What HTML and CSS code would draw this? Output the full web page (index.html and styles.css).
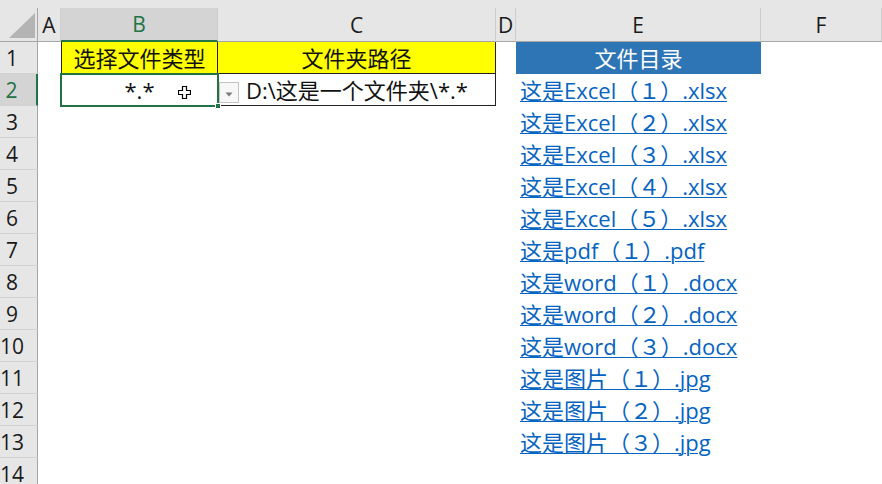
FILE: index.html
```html
<!DOCTYPE html>
<html lang="zh-CN">
<head>
<meta charset="utf-8">
<title>文件目录</title>
<link rel="stylesheet" href="styles.css">
</head>
<body>
<div class="strip"></div>
<div class="grid">
  <div class="ch corner"><svg class="tri" width="26" height="25" viewBox="0 0 26 25"><polygon points="26,0 26,25 0,25" fill="#b4b4b4"/></svg></div>
  <div class="ch">A</div>
  <div class="ch on">B</div>
  <div class="ch">C</div>
  <div class="ch">D</div>
  <div class="ch">E</div>
  <div class="ch">F</div>

  <div class="rh">1</div><div></div>
  <div class="cell yel b1">选择文件类型</div>
  <div class="cell yel c1">文件夹路径</div>
  <div></div>
  <div class="cell head">文件目录</div>
  <div></div>

  <div class="rh on">2</div><div></div>
  <div class="cell b2">*.*
    <span class="sel"><span class="handle"></span></span>
    <svg class="cursor" width="13" height="13" viewBox="0 0 13 13"><polygon points="4.5,0.5 8.5,0.5 8.5,4.5 12.5,4.5 12.5,8.5 8.5,8.5 8.5,12.5 4.5,12.5 4.5,8.5 0.5,8.5 0.5,4.5 4.5,4.5" fill="#fff" stroke="#000" stroke-width="1.2"/></svg>
    <span class="dd"><svg width="8" height="5" viewBox="0 0 8 5"><polygon points="0.5,0.5 7.5,0.5 4,4.5" fill="#7a7a7a"/></svg></span>
  </div>
  <div class="cell c2">D:\这是一个文件夹\*.*</div>
  <div></div>
  <div class="cell lnk"><a href="#">这是Excel（１）.xlsx</a></div>
  <div></div>

  <div class="rh">3</div><div></div><div></div><div></div><div></div><div class="cell lnk"><a href="#">这是Excel（２）.xlsx</a></div><div></div>
  <div class="rh">4</div><div></div><div></div><div></div><div></div><div class="cell lnk"><a href="#">这是Excel（３）.xlsx</a></div><div></div>
  <div class="rh">5</div><div></div><div></div><div></div><div></div><div class="cell lnk"><a href="#">这是Excel（４）.xlsx</a></div><div></div>
  <div class="rh">6</div><div></div><div></div><div></div><div></div><div class="cell lnk"><a href="#">这是Excel（５）.xlsx</a></div><div></div>
  <div class="rh">7</div><div></div><div></div><div></div><div></div><div class="cell lnk"><a href="#">这是pdf（１）.pdf</a></div><div></div>
  <div class="rh">8</div><div></div><div></div><div></div><div></div><div class="cell lnk"><a href="#">这是word（１）.docx</a></div><div></div>
  <div class="rh">9</div><div></div><div></div><div></div><div></div><div class="cell lnk"><a href="#">这是word（２）.docx</a></div><div></div>
  <div class="rh">10</div><div></div><div></div><div></div><div></div><div class="cell lnk"><a href="#">这是word（３）.docx</a></div><div></div>
  <div class="rh">11</div><div></div><div></div><div></div><div></div><div class="cell lnk"><a href="#">这是图片（１）.jpg</a></div><div></div>
  <div class="rh">12</div><div></div><div></div><div></div><div></div><div class="cell lnk"><a href="#">这是图片（２）.jpg</a></div><div></div>
  <div class="rh">13</div><div></div><div></div><div></div><div></div><div class="cell lnk"><a href="#">这是图片（３）.jpg</a></div><div></div>
  <div class="rh">14</div><div></div><div></div><div></div><div></div><div></div><div></div>
</div>
</body>
</html>
```

FILE: styles.css
```css
* { box-sizing: border-box; }
html, body { margin: 0; padding: 0; }
body {
  width: 882px;
  height: 484px;
  overflow: hidden;
  background: #fff;
  color: #111;
  font-family: "Open Sans", "Noto Sans CJK SC", sans-serif;
}
.strip { height: 8px; background: #e6e6e6; }
.grid {
  display: grid;
  grid-template-columns: 38px 23px 157px 278px 20px 245px 121px;
  grid-template-rows: 34px;
  grid-auto-rows: 32px;
}
.ch {
  background: #e6e6e6;
  border-right: 1px solid #cdcdcd;
  border-bottom: 1px solid #a6a6a6;
  display: flex;
  align-items: center;
  justify-content: center;
  font-size: 21px;
  color: #1a1a1a;
}
.ch.on {
  background: #d4d4d4;
  color: #217346;
  border-bottom: 2px solid #217346;
}
.corner {
  justify-content: flex-end;
  align-items: flex-end;
  padding: 0 2px 3px 0;
  border-right: 1px solid #a6a6a6;
}
.tri { display: block; }
.rh {
  background: #e6e6e6;
  border-right: 1px solid #a6a6a6;
  border-bottom: 1px solid #d2d2d2;
  display: flex;
  align-items: center;
  justify-content: center;
  padding-right: 13px;
  font-size: 21px;
  color: #1a1a1a;
}
.rh.on {
  background: #d4d4d4;
  color: #217346;
  border-right: 2px solid #217346;
}
.cell {
  font-size: 22px;
  line-height: 32px;
  white-space: nowrap;
}
.yel { background: #ffff00; text-align: center; color: #111; }
.b1 { border-left: 1px solid #222; border-right: 1px solid #222; }
.c1 { border-right: 1px solid #222; border-bottom: 1px solid #222; }
.b2 { position: relative; text-align: center; color: #111; }
.c2 {
  text-align: center;
  color: #111;
  border-right: 1px solid #222;
  border-bottom: 1px solid #222;
  border-left: 1px solid #222;
}
.sel {
  position: absolute;
  left: -1px; top: -1px; right: -1px; bottom: -1px;
  border: 2px solid #217346;
}
.handle {
  position: absolute;
  right: -4px; bottom: -4px;
  width: 6px; height: 6px;
  background: #217346;
  border: 1px solid #fff;
}
.cursor { position: absolute; left: 117px; top: 12px; }
.dd {
  position: absolute;
  left: 158px; top: 8px;
  width: 20px; height: 21px;
  background: #f7f7f7;
  border: 1px solid #c3c3c3;
  display: flex;
  align-items: center;
  justify-content: center;
  padding-top: 3px;
}
.dd svg { display: block; }
.head {
  background: #2e75b6;
  color: #fff;
  text-align: center;
}
.lnk { padding-left: 4px; }
.lnk a {
  color: #0563c1;
  text-decoration: underline;
  text-decoration-thickness: 1px;
  text-underline-offset: 2px;
}
```
